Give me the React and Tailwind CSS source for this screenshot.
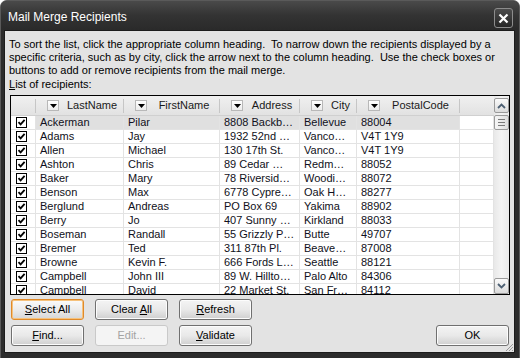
import React from "react";

const rows = [
  ["Ackerman", "Pilar", "8808 Backb…", "Bellevue", "88004"],
  ["Adams", "Jay", "1932 52nd …", "Vanco…", "V4T 1Y9"],
  ["Allen", "Michael", "130 17th St.", "Vanco…", "V4T 1Y9"],
  ["Ashton", "Chris", "89 Cedar …", "Redm…", "88052"],
  ["Baker", "Mary", "78 Riversid…", "Woodi…", "88072"],
  ["Benson", "Max", "6778 Cypre…", "Oak H…", "88277"],
  ["Berglund", "Andreas", "PO Box 69", "Yakima", "88902"],
  ["Berry", "Jo", "407 Sunny …", "Kirkland", "88033"],
  ["Boseman", "Randall", "55 Grizzly P…", "Butte", "49707"],
  ["Bremer", "Ted", "311 87th Pl.", "Beave…", "87008"],
  ["Browne", "Kevin F.", "666 Fords L…", "Seattle", "88121"],
  ["Campbell", "John III", "89 W. Hillto…", "Palo Alto", "84306"],
  ["Campbell", "David", "22 Market St.", "San Fr…", "84112"],
];

const widths = ["w-[88px]", "w-[96px]", "w-[80px]", "w-[57px]", "w-[103px]"];
const headers = ["LastName", "FirstName", "Address", "City", "PostalCode"];

function Check() {
  return (
    <div className="w-[11px] h-[11px] border border-black bg-white flex items-center justify-center">
      <svg width="9" height="9" viewBox="0 0 9 9">
        <path d="M1.5 4.2 L3.6 6.4 L7.6 1.8" fill="none" stroke="#000" strokeWidth="1.8" />
      </svg>
    </div>
  );
}

function DropBtn() {
  return (
    <div className="w-[12px] h-[11px] border border-[#b8b8b8] bg-gradient-to-b from-white to-[#ececec] flex items-center justify-center shrink-0">
      <svg width="7" height="4" viewBox="0 0 7 4">
        <path d="M0 0 L7 0 L3.5 4 Z" fill="#000" />
      </svg>
    </div>
  );
}

function Btn({ children, focused, disabled, className = "" }) {
  let cls =
    "w-[73px] h-[21px] rounded-[3px] flex items-center justify-center text-[11px] ";
  if (disabled) {
    cls += "border border-[#c9c9c9] bg-[#f4f4f4] text-[#a3a3a3]";
  } else if (focused) {
    cls +=
      "border border-[#e08a2a] bg-gradient-to-b from-[#fbfbfb] via-[#ececec] to-[#d6d6d6] text-black shadow-[inset_0_0_0_1px_#f6c27c]";
  } else {
    cls +=
      "border border-[#707070] bg-gradient-to-b from-[#f4f4f4] via-[#e9e9e9] to-[#cfcfcf] text-black shadow-[inset_0_0_0_1px_#fcfcfc]";
  }
  return (
    <div className={cls + " " + className}>
      <span className="whitespace-pre">{children}</span>
    </div>
  );
}

export default function App() {
  return (
    <div
      className="w-[520px] h-[358px] bg-[#2c2c2c] rounded-t-[7px] flex flex-col border border-[#5a5a5a] border-b-0"
      style={{ fontFamily: '"Liberation Sans", Arial, sans-serif' }}
    >
      {/* title bar */}
      <div className="h-[29px] flex items-center justify-between pl-[7px] pr-[6px] rounded-t-[6px] bg-gradient-to-b from-[#4a4a4a] via-[#333333] to-[#2a2a2a]">
        <div className="text-white text-[12px] mt-[2px]">Mail Merge Recipients</div>
        <div className="w-[19px] h-[20px] mt-[5px] rounded-[3px] border border-[#8c8c8c] bg-gradient-to-b from-[#4c4c4c] to-[#262626] flex items-center justify-center">
          <svg width="11" height="11" viewBox="0 0 11 11">
            <path d="M1.5 1.5 L9.5 9.5 M9.5 1.5 L1.5 9.5" stroke="#fff" strokeWidth="2.2" />
          </svg>
        </div>
      </div>

      {/* client */}
      <div className="relative flex-1 ml-[3px] mr-[4px] mb-[5px] bg-[#e3e3e3] border border-[#1c1c1c] text-[11px] text-black leading-[13px]">
        <div className="pl-[4px] pt-[7px] whitespace-nowrap">
          To sort the list, click the appropriate column heading.&nbsp; To narrow down the recipients displayed by a
          <br />
          specific criteria, such as by city, click the arrow next to the column heading.&nbsp; Use the check boxes or
          <br />
          buttons to add or remove recipients from the mail merge.
        </div>
        <div className="pl-[4px] mt-[1px]">
          <span className="underline">L</span>ist of recipients:
        </div>

        {/* list box */}
        <div className="ml-[5px] mt-[4px] w-[500px] h-[200px] border border-black bg-white flex overflow-hidden">
          <div className="w-[483px] flex flex-col overflow-hidden">
            {/* header */}
            <div className="h-[20px] shrink-0 flex bg-gradient-to-b from-[#f0f0f0] to-[#e2e2e2] border-b border-[#d0d0d0]">
              <div className="w-[25px] h-full flex items-center justify-end">
                <div className="w-[1px] h-[14px] bg-[#c6c6c6]" />
              </div>
              {headers.map((h, i) => (
                <div key={h} className={widths[i] + " h-full flex items-center"}>
                  <div className="ml-[11px]">
                    <DropBtn />
                  </div>
                  <div className="flex-1 text-center pl-[2px] text-[#1a1a1a] whitespace-nowrap overflow-hidden">{h}</div>
                  <div className="w-[1px] h-[14px] bg-[#c6c6c6]" />
                </div>
              ))}
              <div className="w-[34px] h-full" />
            </div>
            {rows.map((r, ri) => (
              <div key={ri} className="h-[14px] shrink-0 flex">
                <div className="w-[25px] h-full border-r border-b border-[#e3e3e3] flex pl-[5px] pt-[1px]">
                  <Check />
                </div>
                {r.map((c, ci) => (
                  <div
                    key={ci}
                    className={
                      widths[ci] +
                      " h-full border-r border-b border-[#e3e3e3] pl-[4px] leading-[13px] whitespace-nowrap overflow-hidden text-[#101020] " +
                      (ri === 0 ? "bg-[#e0e0e0]" : "")
                    }
                  >
                    {c}
                  </div>
                ))}
                <div className="w-[34px] h-full border-r border-b border-[#e3e3e3]" />
              </div>
            ))}
          </div>
          {/* scrollbar */}
          <div className="w-[15px] h-full flex flex-col bg-gradient-to-r from-[#e8e8e8] via-[#f4f4f4] to-[#eaeaea]">
            <div className="mt-[2px] h-[15px] rounded-[2px] border border-[#9a9a9a] bg-gradient-to-b from-[#fafafa] to-[#dcdcdc] flex items-center justify-center">
              <svg width="9" height="6" viewBox="0 0 9 6">
                <path d="M1 5 L4.5 1.5 L8 5" fill="none" stroke="#4d6073" strokeWidth="1.8" />
              </svg>
            </div>
            <div className="mt-[2px] h-[15px] rounded-[2px] border border-[#9a9a9a] bg-gradient-to-r from-[#f6f6f6] to-[#dedede] flex flex-col items-center justify-center gap-[2px]">
              <div className="w-[7px] h-[1px] bg-[#7a7a7a]" />
              <div className="w-[7px] h-[1px] bg-[#7a7a7a]" />
              <div className="w-[7px] h-[1px] bg-[#7a7a7a]" />
            </div>
            <div className="flex-1" />
            <div className="h-[16px] rounded-[2px] border border-[#9a9a9a] bg-gradient-to-b from-[#fafafa] to-[#dcdcdc] flex items-center justify-center">
              <svg width="9" height="6" viewBox="0 0 9 6">
                <path d="M1 1 L4.5 4.5 L8 1" fill="none" stroke="#4d6073" strokeWidth="1.8" />
              </svg>
            </div>
          </div>
        </div>

        {/* buttons */}
        <div className="ml-[6px] mt-[4px] w-[498px] flex flex-col gap-[5px]">
          <div className="flex gap-[11px]">
            <Btn focused>
              <span className="underline">S</span>elect All
            </Btn>
            <Btn>
              Clear <span className="underline">A</span>ll
            </Btn>
            <Btn>
              <span className="underline">R</span>efresh
            </Btn>
          </div>
          <div className="flex gap-[11px]">
            <Btn>
              <span className="underline">F</span>ind...
            </Btn>
            <Btn disabled>Edit...</Btn>
            <Btn>
              <span className="underline">V</span>alidate
            </Btn>
            <div className="flex-1" />
            <Btn>OK</Btn>
          </div>
        </div>

        {/* resize grip */}
        <svg className="absolute right-[0px] bottom-[0px]" width="10" height="10" viewBox="0 0 10 10">
          <path d="M9 2 L2 9 M9 5 L5 9 M9 8 L8 9" stroke="#9a9a9a" strokeWidth="1" />
        </svg>
      </div>
    </div>
  );
}
